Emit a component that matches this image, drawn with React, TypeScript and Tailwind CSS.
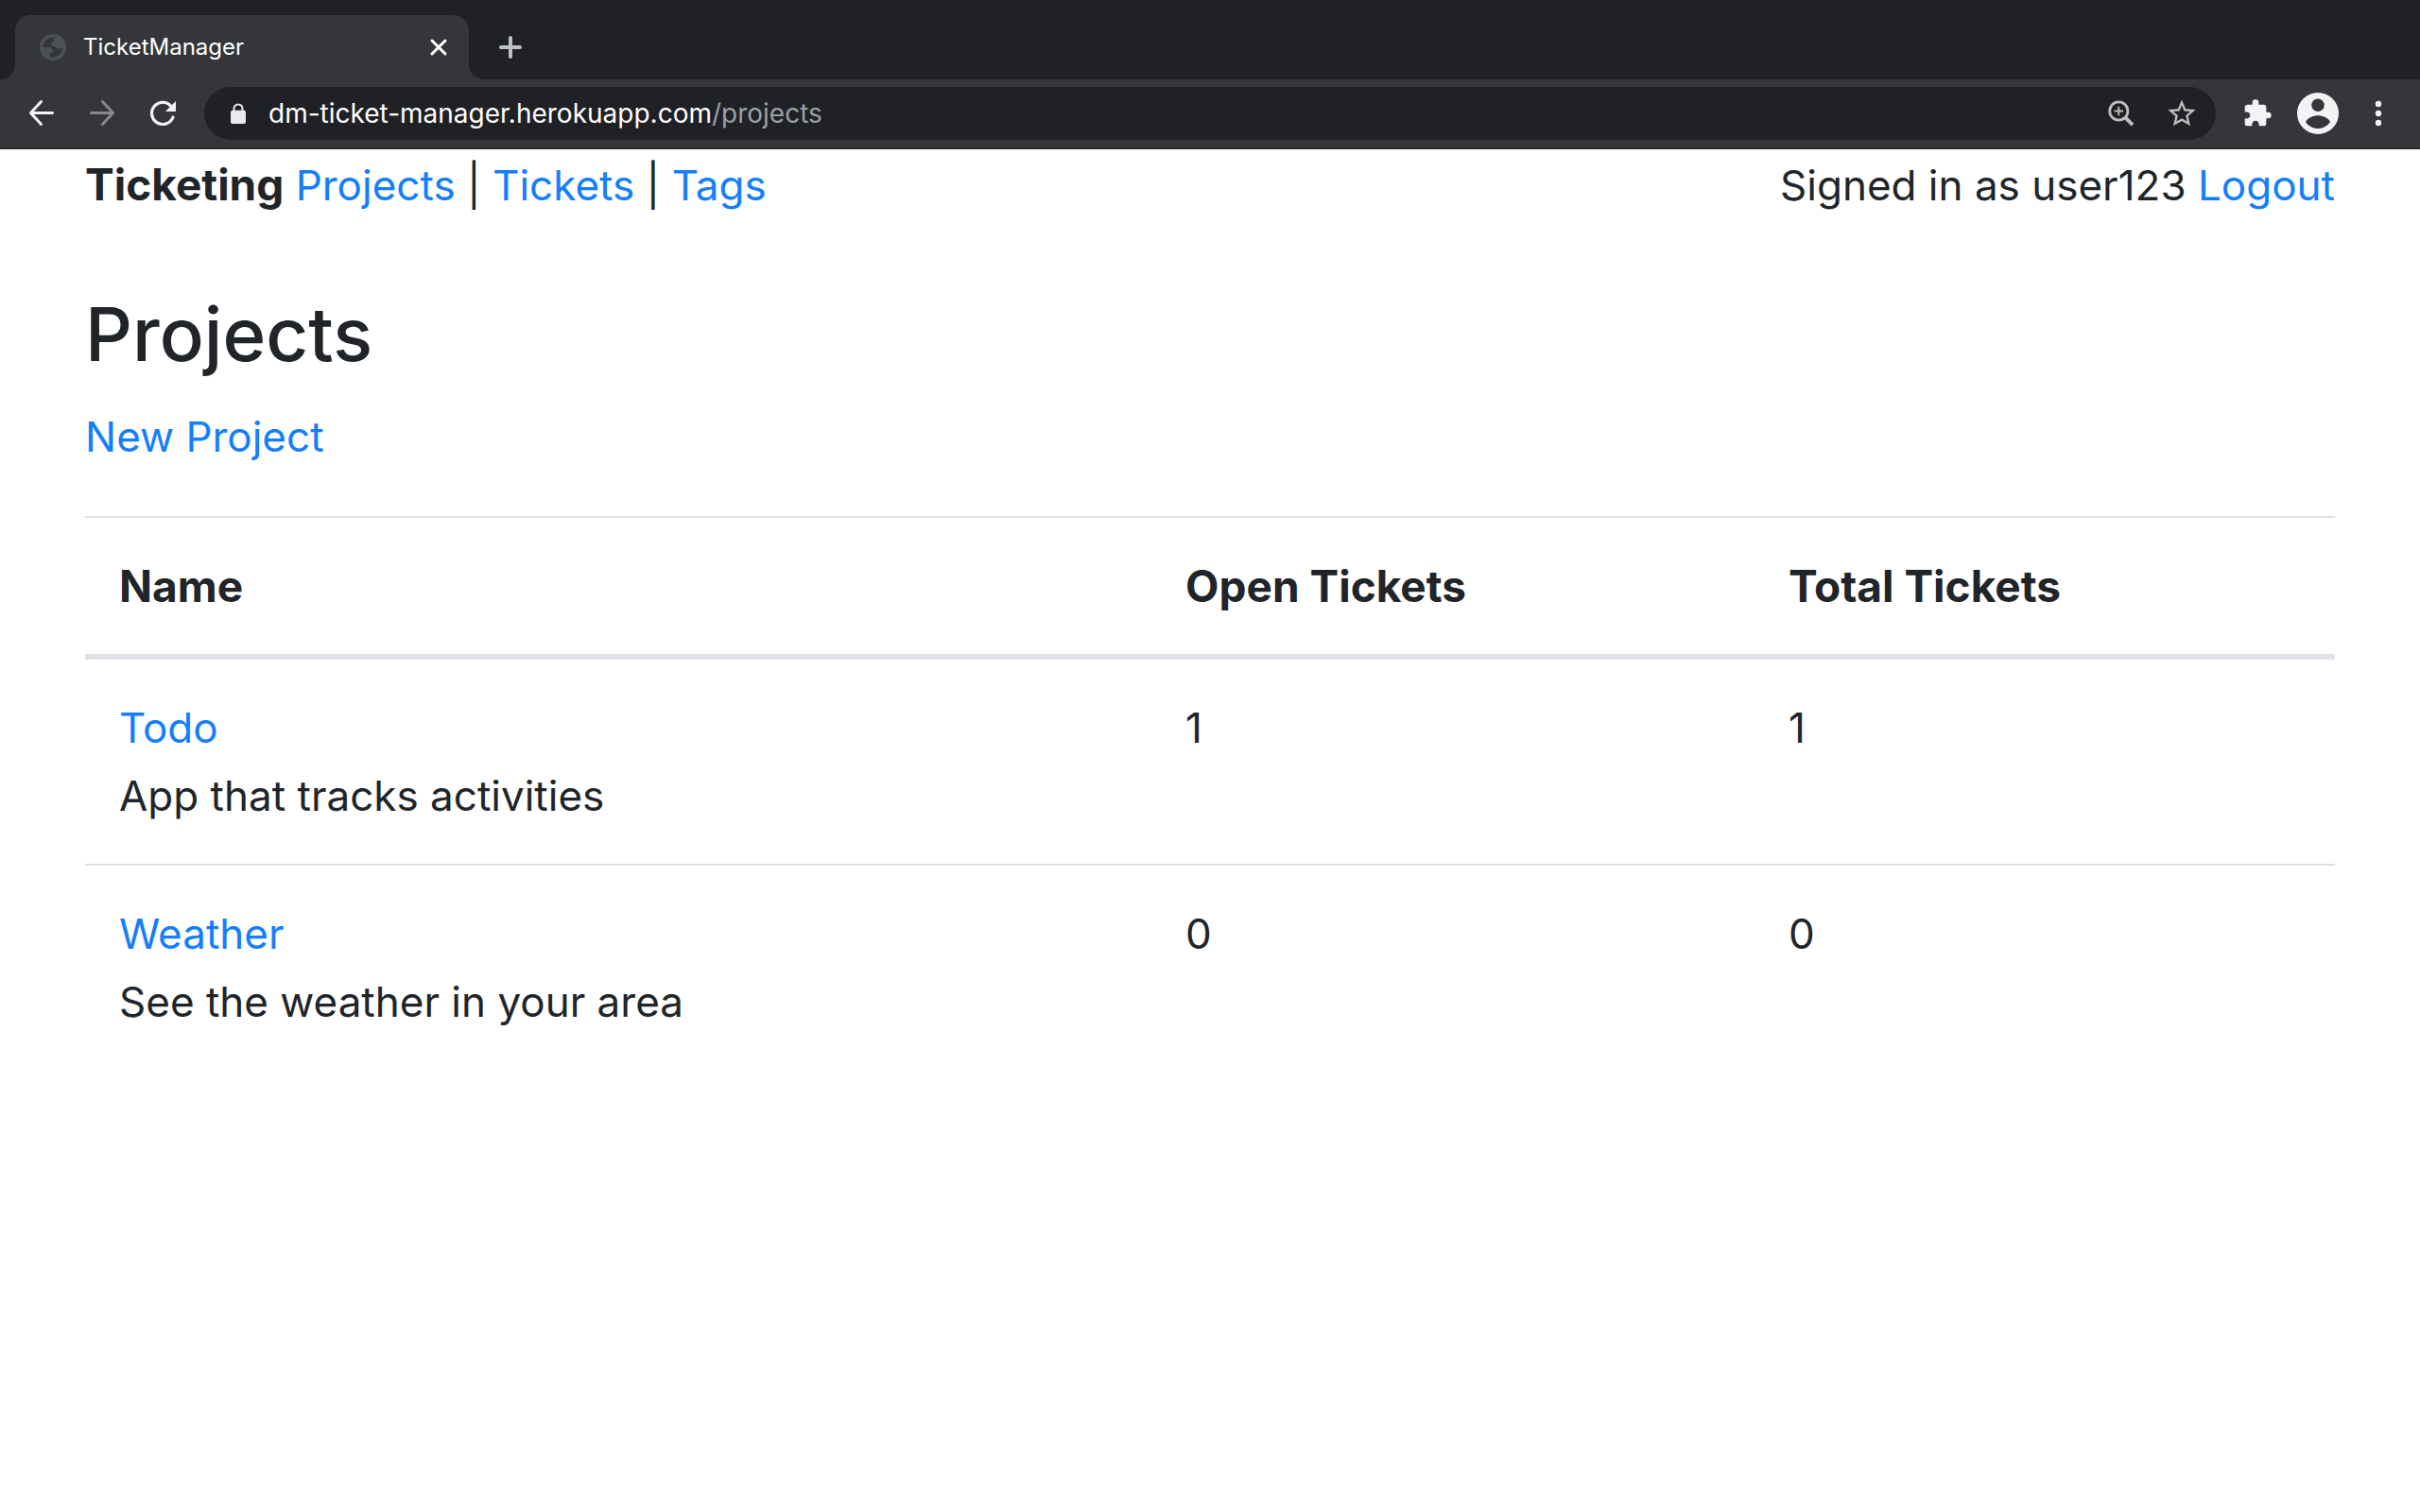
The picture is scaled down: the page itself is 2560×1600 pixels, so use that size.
import React from "react";

type Project = { name: string; description: string; open: number; total: number };

const projects: Project[] = [
  { name: "Todo", description: "App that tracks activities", open: 1, total: 1 },
  { name: "Weather", description: "See the weather in your area", open: 0, total: 0 },
];

function Globe() {
  return (
    <svg viewBox="0 0 28 28" className="size-7" aria-hidden="true">
      <circle cx="14" cy="14" r="14" fill="#4d5156" />
      <path
        d="M15.5 3.6C9 3.2 3.6 8 3.5 14h6.2c2.3 0 4 1.6 4 3.6v1.6c-1.800 0-3 .7-3 2v2.700c1 .4 2.100.6 3.300.6 5.800 0 10.400-4.500 10.500-10.200-1.700 1.500-3.600 1.700-5 1.100-1.600-.7-2.100-2-3.700-2.200-1.800-.2-3.600-.9-3.600-2.700 0-1.900 1.500-2.800 3.300-2.800 0-1.800-.4-2.700 0-4.100z"
        fill="#35363a"
      />
    </svg>
  );
}

function TabStrip() {
  return (
    <div className="flex h-[84px] items-end bg-[#202124]">
      <div className="size-4 bg-[#35363a]">
        <div className="size-4 rounded-br-2xl bg-[#202124]" />
      </div>
      <div className="flex h-[68px] w-[480px] items-center rounded-t-2xl bg-[#35363a] pr-5 pl-[26px]">
        <Globe />
        <span className="ml-[18px] flex-1 text-2xl text-white">TicketManager</span>
        <button type="button" aria-label="Close tab" className="flex size-6 items-center justify-center">
          <svg viewBox="0 0 24 24" className="size-6" fill="none" stroke="#fff" strokeWidth="3" strokeLinecap="round">
            <path d="M5 5l14 14M19 5L5 19" />
          </svg>
        </button>
      </div>
      <div className="size-4 bg-[#35363a]">
        <div className="size-4 rounded-bl-2xl bg-[#202124]" />
      </div>
      <button type="button" aria-label="New tab" className="ml-3 flex h-[68px] w-8 items-center justify-center">
        <svg viewBox="0 0 24 24" className="size-6" fill="none" stroke="#bdc1c6" strokeWidth="4" strokeLinecap="round">
          <path d="M12 2v20M2 12h20" />
        </svg>
      </button>
    </div>
  );
}

function Toolbar() {
  return (
    <div className="flex h-[74px] items-center border-b-2 border-[#28292c] bg-[#35363a] px-6">
      <div className="flex gap-6">
        <button type="button" aria-label="Back" className="size-10">
          <svg viewBox="0 0 40 40" className="size-10" fill="none" stroke="#f1f3f4" strokeWidth="3" strokeLinecap="round" strokeLinejoin="round">
            <path d="M31.500 19.500H8.500M19.500 7.500l-11 12 11 12" />
          </svg>
        </button>
        <button type="button" aria-label="Forward" className="size-10">
          <svg viewBox="0 0 40 40" className="size-10" fill="none" stroke="#87888a" strokeWidth="3" strokeLinecap="round" strokeLinejoin="round">
            <path d="M8.500 19.500h23M20.500 7.500l11 12-11 12" />
          </svg>
        </button>
        <button type="button" aria-label="Reload" className="size-10">
          <svg viewBox="0 0 40 40" className="size-10">
            <path d="M31 24A11.600 11.600 0 1 1 28.500 11.800" fill="none" stroke="#f1f3f4" strokeWidth="3.200" strokeLinecap="round" />
            <path d="M34 7v11H23z" fill="#f1f3f4" />
          </svg>
        </button>
      </div>
      <div className="ml-6 flex h-14 flex-1 items-center rounded-full bg-[#202124] pr-5 pl-6">
        <svg viewBox="0 0 24 24" className="size-6 shrink-0" aria-hidden="true">
          <path d="M7.500 10V7a4.500 4.500 0 0 1 9 0V10" fill="none" stroke="#e8eaed" strokeWidth="2" />
          <rect x="4" y="8.700" width="16" height="14.300" rx="2" fill="#e8eaed" />
        </svg>
        <div className="ml-5 flex-1 text-[28px] leading-9 text-white">
          dm-ticket-manager.herokuapp.com<span className="text-[#9aa0a6]">/projects</span>
        </div>
        <div className="flex gap-8">
          <button type="button" aria-label="Zoom" className="size-8">
            <svg viewBox="0 0 32 32" className="size-8" fill="none" stroke="#bdbdbd">
              <circle cx="13.300" cy="13.500" r="9.600" strokeWidth="2.800" />
              <path d="M20 20.200l8 8" strokeWidth="4" />
              <path d="M13.300 8.800v9.400M8.600 13.500h9.400" strokeWidth="1.900" />
            </svg>
          </button>
          <button type="button" aria-label="Bookmark this page" className="size-8">
            <svg viewBox="1.1 1 21.8 21.8" className="size-8" fill="#bdbdbd">
              <path d="M22 9.240l-7.190-.62L12 2 9.190 8.630 2 9.240l5.460 4.730L5.820 21 12 17.270 18.180 21l-1.630-7.030L22 9.240zM12 15.400l-3.760 2.270 1-4.280-3.320-2.880 4.380-.38L12 6.100l1.710 4.040 4.380.38-3.320 2.880 1 4.280L12 15.400z" />
            </svg>
          </button>
        </div>
      </div>
      <div className="flex items-center pl-7">
        <button type="button" aria-label="Extensions" className="mr-[26px] size-8">
          <svg viewBox="0 0 24 24" className="size-8" fill="#f1f3f4">
            <path d="M20.500 11H19V7c0-1.100-.9-2-2-2h-4V3.500a2.500 2.500 0 0 0-5 0V5H4c-1.100 0-1.990.9-1.990 2v3.800H3.500c1.490 0 2.700 1.210 2.700 2.700s-1.210 2.700-2.700 2.700H2V20c0 1.100.9 2 2 2h3.800v-1.500c0-1.490 1.210-2.700 2.700-2.700s2.700 1.210 2.700 2.700V22H17c1.100 0 2-.9 2-2v-4h1.500a2.500 2.500 0 0 0 0-5z" />
          </svg>
        </button>
        <button type="button" aria-label="Profile" className="mr-[22px] size-11">
          <svg viewBox="0 0 44 44" className="size-11">
            <circle cx="22" cy="22" r="22" fill="#f1f3f4" />
            <circle cx="22" cy="13.300" r="6.800" fill="#35363a" />
            <path d="M9 31c2-4.600 8-6.800 13-6.800S33 26.400 35 31c-2.800 4.300-7.600 7-13 7s-10.200-2.700-13-7z" fill="#35363a" />
          </svg>
        </button>
        <button type="button" aria-label="Menu" className="size-10">
          <svg viewBox="0 0 40 40" className="size-10" fill="#f1f3f4">
            <circle cx="20" cy="10" r="3.200" />
            <circle cx="20" cy="20" r="3.200" />
            <circle cx="20" cy="30" r="3.200" />
          </svg>
        </button>
      </div>
    </div>
  );
}

function Link({ children }: { children: React.ReactNode }) {
  return (
    <a href="#" className="text-[#147efb]">
      {children}
    </a>
  );
}

export default function App() {
  return (
    <div className="min-h-screen bg-white font-['Inter',sans-serif]">
      <TabStrip />
      <Toolbar />
      <div className="px-[90px] pt-0.5 text-[44px] leading-[72px] text-[#212529]">
        <header className="flex justify-between">
          <nav>
            <b className="text-[46px] leading-none font-bold">Ticketing</b> <Link>Projects</Link> | <Link>Tickets</Link> | <Link>Tags</Link>
          </nav>
          <div>
            Signed in as user123 <Link>Logout</Link>
          </div>
        </header>
        <main className="pt-[72px]">
          <h1 className="mb-[22px] text-[78px] leading-[100px] font-medium">Projects</h1>
          <Link>New Project</Link>
          <table className="mt-12 w-full table-fixed border-collapse text-left">
            <thead className="text-[46px]">
              <tr className="border-t-2 border-b-6 border-[#dee2e6]">
                <th className="w-[47.4%] p-9 font-bold">Name</th>
                <th className="w-[26.8%] p-9 font-bold">Open Tickets</th>
                <th className="p-9 font-bold">Total Tickets</th>
              </tr>
            </thead>
            <tbody>
              {projects.map((project) => (
                <tr key={project.name} className="border-t-2 border-[#dee2e6] align-top">
                  <td className="p-9">
                    <Link>{project.name}</Link>
                    <div>{project.description}</div>
                  </td>
                  <td className="p-9">{project.open}</td>
                  <td className="p-9">{project.total}</td>
                </tr>
              ))}
            </tbody>
          </table>
        </main>
      </div>
    </div>
  );
}
